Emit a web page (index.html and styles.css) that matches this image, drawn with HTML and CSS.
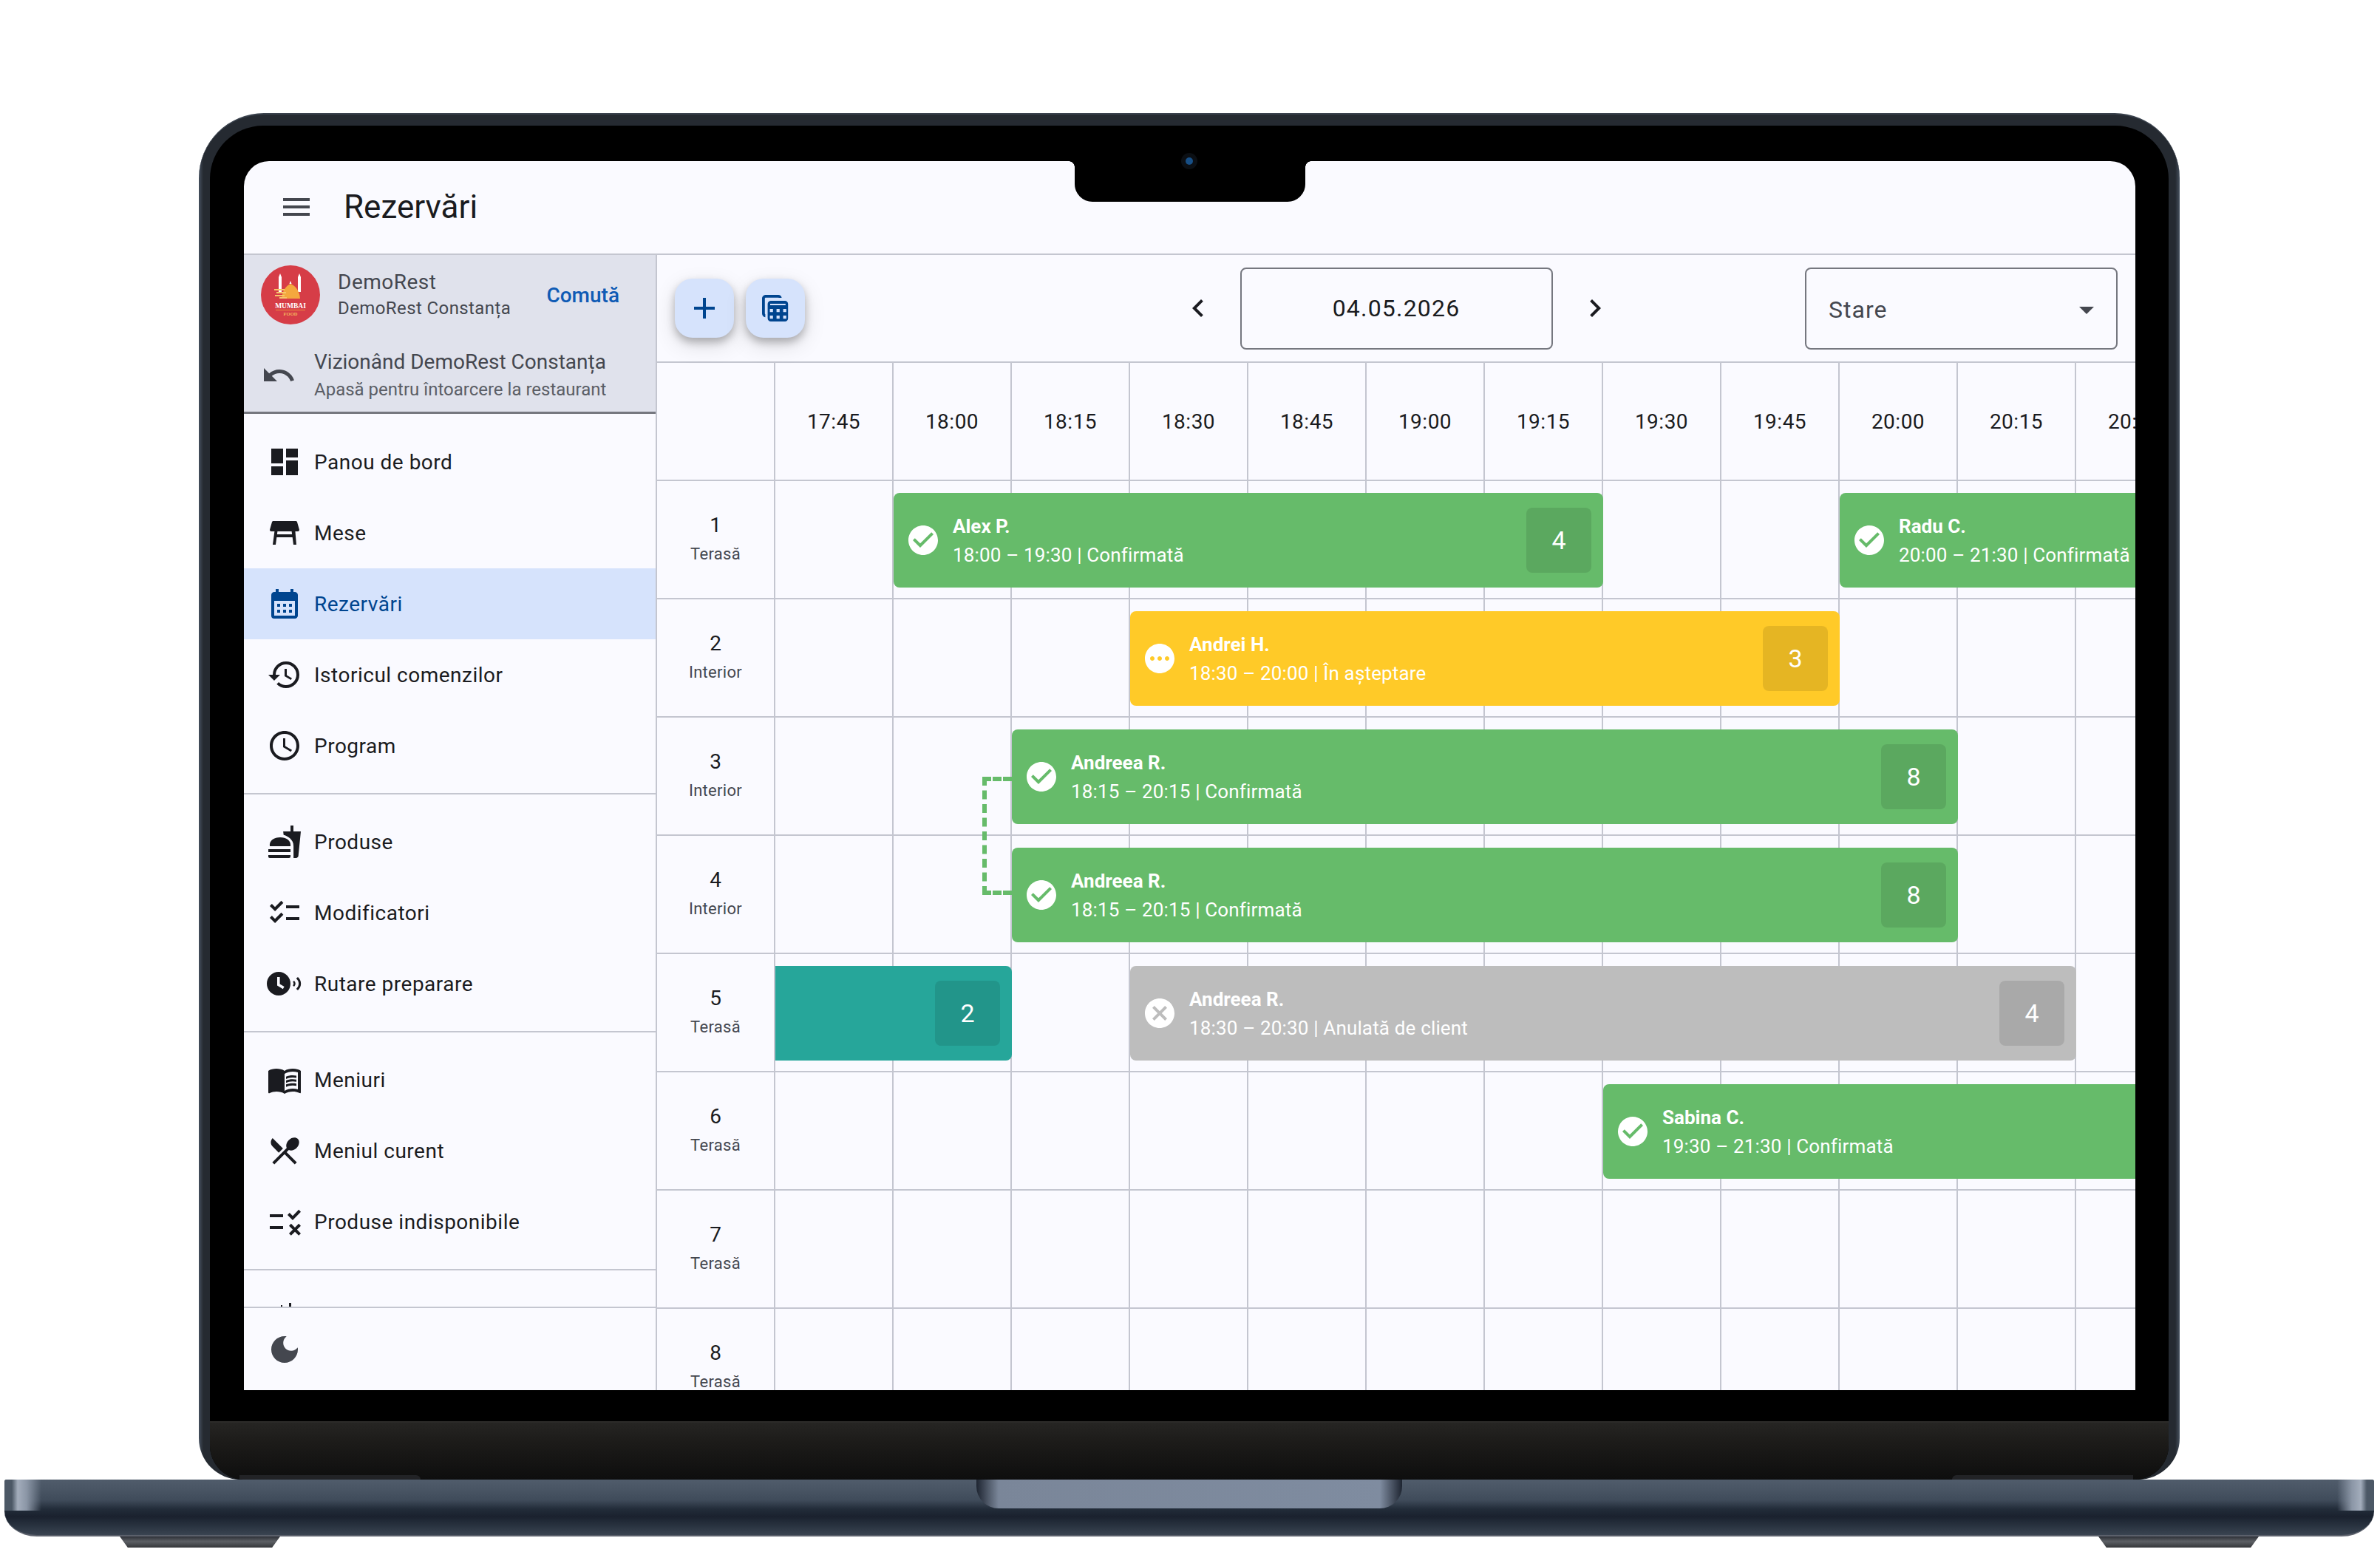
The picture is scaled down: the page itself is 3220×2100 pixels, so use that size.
FILE: index.html
```html
<!DOCTYPE html>
<html lang="ro">
<head>
  <meta charset="UTF-8" />
  <meta name="viewport" content="width=device-width, initial-scale=1.0"/>
  <title>Rezervări</title>
  <link rel="stylesheet" href="styles.css">
</head>
<body>

<div class="device">
  <div class="lid">
    <div class="bezel">
      <div class="screen">
        <div class="notch"><span class="camera"></span></div>

        <header class="topbar">
          <svg class="icon" viewBox="0 0 24 24"><path d="M3 18h18v-2H3v2zm0-5h18v-2H3v2zm0-7v2h18V6H3z"/></svg>
          <h1>Rezervări</h1>
        </header>

        <div class="app">
          <aside class="sidebar">
            <div class="account">
              <div class="account-top">
                <svg class="logo" viewBox="0 0 80 80">
                  <circle cx="40" cy="40" r="40" fill="#d63d47"/>
                  <path d="M24 16h4v20h-4zM50 16h4v20h-4z" fill="#fff"/>
                  <path d="M26 11l2 5h-4zM52 11l2 5h-4zM40 21l1.500 4h-3z" fill="#fff"/>
                  <path d="M28 45c1-11 6-17 12-20 7 3 12 9 13 20z" fill="#f4a83e"/>
                  <path d="M18 32h14v2H18zM21 36h13v2H21zM19 40h13v2H19zM25 43h10v2H25z" fill="#f8c66b"/>
                  <text x="40" y="58" class="logo-name">MUMBAI</text>
                  <path d="M20 60h40v.7H20z" fill="#f4a83e"/>
                  <text x="40" y="68" class="logo-sub">FOOD</text>
                </svg>
                <div class="account-text">
                  <div class="account-name">DemoRest</div>
                  <div class="account-place">DemoRest Constanța</div>
                </div>
                <a class="switch">Comută</a>
              </div>
              <div class="account-back">
                <svg class="icon" viewBox="0 0 24 24"><path d="M12.500 8c-2.650 0-5.050.99-6.900 2.600L2 7v9h9l-3.620-3.620c1.390-1.160 3.160-1.880 5.120-1.880 3.540 0 6.550 2.310 7.600 5.500l2.370-.78C21.080 11.030 17.150 8 12.500 8z"/></svg>
                <div>
                  <div class="back-title">Vizionând DemoRest Constanța</div>
                  <div class="back-sub">Apasă pentru întoarcere la restaurant</div>
                </div>
              </div>
            </div>

            <nav class="nav">
              <a class="nav-item"><svg class="icon" viewBox="0 0 24 24"><path d="M3 13h8V3H3v10zm0 8h8v-6H3v6zm10 0h8V11h-8v10zm0-18v6h8V3h-8z"/></svg>Panou de bord</a>
              <a class="nav-item"><svg class="icon" viewBox="0 0 24 24"><path d="M21.960 9.730l-1.430-5c-.12-.43-.52-.73-.96-.73H4.430c-.45 0-.84.3-.96.73l-1.430 5c-.18.63.3 1.270.96 1.270h2.200L4 20h2l.67-5h10.670l.66 5h2l-.77-9H21c.66 0 1.140-.64.96-1.270zM6.930 13l.27-2h9.600l.27 2H6.930z"/></svg>Mese</a>
              <a class="nav-item active"><svg class="icon" viewBox="0 0 24 24"><path d="M19 4h-1V2h-2v2H8V2H6v2H5c-1.110 0-1.990.9-1.990 2L3 20a2 2 0 0 0 2 2h14c1.100 0 2-.9 2-2V6c0-1.100-.9-2-2-2zm0 16H5V10h14v10zM9 14H7v-2h2v2zm4 0h-2v-2h2v2zm4 0h-2v-2h2v2zm-8 4H7v-2h2v2zm4 0h-2v-2h2v2zm4 0h-2v-2h2v2z"/></svg>Rezervări</a>
              <a class="nav-item"><svg class="icon" viewBox="0 0 24 24"><path d="M13 3a9 9 0 0 0-9 9H1l3.890 3.890.07.14L9 12H6c0-3.870 3.130-7 7-7s7 3.130 7 7-3.130 7-7 7c-1.930 0-3.680-.79-4.940-2.060l-1.420 1.420A8.954 8.954 0 0 0 13 21a9 9 0 0 0 0-18zm-1 5v5l4.280 2.540.72-1.210-3.500-2.080V8H12z"/></svg>Istoricul comenzilor</a>
              <a class="nav-item"><svg class="icon" viewBox="0 0 24 24"><path d="M11.990 2C6.470 2 2 6.480 2 12s4.470 10 9.990 10C17.520 22 22 17.520 22 12S17.520 2 11.990 2zM12 20c-4.420 0-8-3.580-8-8s3.580-8 8-8 8 3.580 8 8-3.580 8-8 8zm.5-13H11v6l5.250 3.150.75-1.230-4.500-2.670z"/></svg>Program</a>
              <hr>
              <a class="nav-item"><svg class="icon" viewBox="0 0 24 24"><path d="M18.060 22.990h1.660c.84 0 1.530-.64 1.630-1.460L23 5.050h-5V1h-1.970v4.050h-4.970l.3 2.340c1.710.47 3.310 1.320 4.270 2.260 1.440 1.420 2.430 2.890 2.430 5.290v8.050zM1 21.990V21h15.030v.99c0 .55-.45 1-1.010 1H2.010c-.56 0-1.010-.45-1.010-1zm15.030-7c.5-4-3.010-6-7.010-6s-7.520 2-7.020 6h14.030zM1.020 17h15v2h-15z"/></svg>Produse</a>
              <a class="nav-item"><svg class="icon" viewBox="0 0 24 24"><path d="M22 7h-9v2h9V7zm0 8h-9v2h9v-2zM5.540 11 2 7.460l1.410-1.410 2.120 2.120 4.240-4.240 1.410 1.410L5.540 11zm0 8L2 15.460l1.410-1.410 2.120 2.120 4.240-4.240 1.410 1.410L5.540 19z"/></svg>Modificatori</a>
              <a class="nav-item"><svg class="icon" viewBox="0 0 24 24"><path d="M8 4a8 8 0 1 0 0 16A8 8 0 0 0 8 4zm2.900 11.600L7 13.200V7.500h1.800v4.700l3 1.800-.9 1.600z"/><path d="M18.500 10c1.200 1.200 1.200 2.800 0 4l-.9-.8c.7-.8.7-1.600 0-2.400zM21 7.500c2.800 2.600 2.800 6.400 0 9l-1.100-1c2.200-2.100 2.200-4.900 0-7z"/></svg>Rutare preparare</a>
              <hr>
              <a class="nav-item"><svg class="icon" viewBox="0 0 24 24"><path d="M21 5c-1.110-.35-2.330-.5-3.500-.5-1.950 0-4.050.4-5.500 1.500-1.450-1.100-3.550-1.500-5.500-1.500S2.450 4.900 1 6v14.650c0 .25.25.5.5.5.1 0 .15-.05.25-.05C3.100 20.450 5.050 20 6.500 20c1.950 0 4.050.4 5.500 1.500 1.350-.85 3.800-1.500 5.500-1.500 1.650 0 3.350.3 4.750 1.050.1.05.15.05.25.05.25 0 .5-.25.5-.5V6c-.6-.45-1.250-.75-2-1zm0 13.500c-1.100-.35-2.300-.5-3.500-.5-1.700 0-4.150.65-5.500 1.500V8c1.350-.85 3.800-1.500 5.500-1.500 1.200 0 2.400.15 3.500.5v11.500z"/><path d="M17.500 10.500c.88 0 1.730.09 2.500.26V9.240c-.79-.15-1.640-.24-2.500-.24-1.700 0-3.240.29-4.500.83v1.660c1.130-.64 2.700-.99 4.500-.99zM13 12.490v1.660c1.130-.64 2.700-.99 4.500-.99.88 0 1.730.09 2.500.26V11.900c-.79-.15-1.640-.24-2.500-.24-1.700 0-3.240.3-4.500.83zM17.500 14.330c-1.700 0-3.240.29-4.500.83v1.660c1.130-.64 2.700-.99 4.500-.99.88 0 1.730.09 2.500.26v-1.520c-.79-.16-1.640-.24-2.500-.24z"/></svg>Meniuri</a>
              <a class="nav-item"><svg class="icon" viewBox="0 0 24 24"><path d="M8.100 13.340l2.830-2.830L3.910 3.500c-1.560 1.560-1.560 4.090 0 5.660l4.190 4.180zm6.780-1.810c1.530.71 3.680.21 5.270-1.380 1.910-1.910 2.280-4.650.81-6.120-1.460-1.460-4.200-1.100-6.120.81-1.590 1.590-2.090 3.740-1.380 5.270L3.700 19.870l1.410 1.410L12 14.410l6.880 6.880 1.410-1.410L13.410 13l1.470-1.470z"/></svg>Meniul curent</a>
              <a class="nav-item"><svg class="icon" viewBox="0 0 24 24"><path d="M2 7h9v2H2zM2 15h9v2H2zM17.500 11 14 7.460l1.410-1.410 2.090 2.120 4.090-4.240L23 5.340 17.500 11zM21.590 13.410 23 14.820 20.410 17.400 23 20l-1.410 1.410L19 18.820l-2.590 2.590L15 20l2.590-2.600L15 14.820l1.410-1.410L19 15.990z"/></svg>Produse indisponibile</a>
              <hr>
              <a class="nav-item"><svg class="icon" viewBox="0 0 24 24"><path d="M15 2h1.500v8H15zM9.500 3.500h1v6h-1zM3 9h18v10H3z"/></svg></a>
            </nav>

            <div class="theme">
              <svg class="icon" viewBox="0 0 24 24"><path d="M12 3c-4.970 0-9 4.030-9 9s4.030 9 9 9 9-4.030 9-9c0-.46-.04-.92-.1-1.360-.98 1.370-2.580 2.260-4.400 2.260-2.980 0-5.400-2.420-5.400-5.400 0-1.810.89-3.420 2.260-4.400-.44-.06-.9-.1-1.360-.1z"/></svg>
            </div>
          </aside>

          <main class="main">
            <div class="toolbar">
              <div class="fabs">
                <button class="fab"><svg class="icon" viewBox="0 0 24 24"><path d="M19 13h-6v6h-2v-6H5v-2h6V5h2v6h6v2z"/></svg></button>
                <button class="fab"><svg class="icon" viewBox="0 0 24 24"><path d="M5.500 3H14c1.200 0 2.100.8 2.300 2h-2c-.1-.1-.2-.1-.3-.1H5.500c-.4 0-.6.3-.6.6v10c0 .3.100.5.3.6v2c-1.300-.2-2.200-1.200-2.200-2.500v-10C3 4.100 4.100 3 5.500 3z"/><path fill-rule="evenodd" d="M9 7h9.500c1.200 0 2.100.9 2.100 2.100v9.800c0 1.200-.9 2.100-2.100 2.100H9c-1.200 0-2.200-.9-2.200-2.100V9.100C6.800 7.900 7.800 7 9 7zM8.500 9v1h10.400V9zM8.300 12.500v2.100h2.100v-2.100zm4.500 0v2.100h2.100v-2.100zm4.500 0v2.100h2.100v-2.100zM8.300 17v2.100h2.100V17zm4.500 0v2.100h2.100V17zm4.500 0v2.100h2.100V17z"/></svg></button>
              </div>
              <div class="date-nav">
                <svg class="icon" viewBox="0 0 24 24"><path d="M15.410 7.410 14 6l-6 6 6 6 1.410-1.410L10.830 12z"/></svg>
                <div class="date-field">04.05.2026</div>
                <svg class="icon" viewBox="0 0 24 24"><path d="M10 6 8.590 7.410 13.170 12l-4.580 4.590L10 18l6-6z"/></svg>
              </div>
              <div class="select">
                <span>Stare</span>
                <svg class="icon" viewBox="0 0 24 24"><path d="M7 10l5 5 5-5z"/></svg>
              </div>
            </div>

            <div class="board">
              <div class="time"></div>
              <div class="time">17:45</div>
              <div class="time">18:00</div>
              <div class="time">18:15</div>
              <div class="time">18:30</div>
              <div class="time">18:45</div>
              <div class="time">19:00</div>
              <div class="time">19:15</div>
              <div class="time">19:30</div>
              <div class="time">19:45</div>
              <div class="time">20:00</div>
              <div class="time">20:15</div>
              <div class="time">20:30</div>

              <div class="table-cell" style="grid-row: 2"><b>1</b><span>Terasă</span></div>
              <div class="table-cell" style="grid-row: 3"><b>2</b><span>Interior</span></div>
              <div class="table-cell" style="grid-row: 4"><b>3</b><span>Interior</span></div>
              <div class="table-cell" style="grid-row: 5"><b>4</b><span>Interior</span></div>
              <div class="table-cell" style="grid-row: 6"><b>5</b><span>Terasă</span></div>
              <div class="table-cell" style="grid-row: 7"><b>6</b><span>Terasă</span></div>
              <div class="table-cell" style="grid-row: 8"><b>7</b><span>Terasă</span></div>
              <div class="table-cell" style="grid-row: 9"><b>8</b><span>Terasă</span></div>

              <div class="booking green" style="grid-row: 2; grid-column: 3 / 9">
                <svg class="icon" viewBox="0 0 24 24"><path d="M12 2C6.480 2 2 6.480 2 12s4.480 10 10 10 10-4.480 10-10S17.520 2 12 2zm-2 15-5-5 1.410-1.410L10 14.170l7.590-7.590L19 8l-9 9z"/></svg>
                <div class="booking-text"><b>Alex P.</b><span>18:00 – 19:30 | Confirmată</span></div>
                <div class="party">4</div>
              </div>
              <div class="booking green" style="grid-row: 2; grid-column: 11 / 17">
                <svg class="icon" viewBox="0 0 24 24"><path d="M12 2C6.480 2 2 6.480 2 12s4.480 10 10 10 10-4.480 10-10S17.520 2 12 2zm-2 15-5-5 1.410-1.410L10 14.170l7.590-7.590L19 8l-9 9z"/></svg>
                <div class="booking-text"><b>Radu C.</b><span>20:00 – 21:30 | Confirmată</span></div>
              </div>
              <div class="booking yellow" style="grid-row: 3; grid-column: 5 / 11">
                <svg class="icon" viewBox="0 0 24 24"><path d="M12 2C6.480 2 2 6.480 2 12s4.480 10 10 10 10-4.480 10-10S17.520 2 12 2zM7 13.500c-.83 0-1.500-.67-1.500-1.500s.67-1.500 1.500-1.500 1.500.67 1.500 1.500-.67 1.500-1.500 1.500zm5 0c-.83 0-1.500-.67-1.500-1.500s.67-1.500 1.500-1.500 1.500.67 1.500 1.500-.67 1.500-1.500 1.500zm5 0c-.83 0-1.500-.67-1.500-1.500s.67-1.500 1.500-1.500 1.500.67 1.500 1.500-.67 1.500-1.500 1.500z"/></svg>
                <div class="booking-text"><b>Andrei H.</b><span>18:30 – 20:00 | În așteptare</span></div>
                <div class="party">3</div>
              </div>
              <div class="booking green" style="grid-row: 4; grid-column: 4 / 12">
                <svg class="icon" viewBox="0 0 24 24"><path d="M12 2C6.480 2 2 6.480 2 12s4.480 10 10 10 10-4.480 10-10S17.520 2 12 2zm-2 15-5-5 1.410-1.410L10 14.170l7.590-7.590L19 8l-9 9z"/></svg>
                <div class="booking-text"><b>Andreea R.</b><span>18:15 – 20:15 | Confirmată</span></div>
                <div class="party">8</div>
              </div>
              <div class="booking green" style="grid-row: 5; grid-column: 4 / 12">
                <svg class="icon" viewBox="0 0 24 24"><path d="M12 2C6.480 2 2 6.480 2 12s4.480 10 10 10 10-4.480 10-10S17.520 2 12 2zm-2 15-5-5 1.410-1.410L10 14.170l7.590-7.590L19 8l-9 9z"/></svg>
                <div class="booking-text"><b>Andreea R.</b><span>18:15 – 20:15 | Confirmată</span></div>
                <div class="party">8</div>
              </div>
              <div class="booking teal" style="grid-row: 6; grid-column: 2 / 4">
                <div class="party">2</div>
              </div>
              <div class="booking grey" style="grid-row: 6; grid-column: 5 / 13">
                <svg class="icon" viewBox="0 0 24 24"><path d="M12 2C6.470 2 2 6.470 2 12s4.470 10 10 10 10-4.470 10-10S17.530 2 12 2zm5 13.590L15.590 17 12 13.410 8.410 17 7 15.590 10.590 12 7 8.410 8.410 7 12 10.590 15.590 7 17 8.410 13.410 12 17 15.590z"/></svg>
                <div class="booking-text"><b>Andreea R.</b><span>18:30 – 20:30 | Anulată de client</span></div>
                <div class="party">4</div>
              </div>
              <div class="booking green" style="grid-row: 7; grid-column: 9 / 17">
                <svg class="icon" viewBox="0 0 24 24"><path d="M12 2C6.480 2 2 6.480 2 12s4.480 10 10 10 10-4.480 10-10S17.520 2 12 2zm-2 15-5-5 1.410-1.410L10 14.170l7.590-7.590L19 8l-9 9z"/></svg>
                <div class="booking-text"><b>Sabina C.</b><span>19:30 – 21:30 | Confirmată</span></div>
              </div>

              <!-- links the two tables of the same booking -->
              <div class="link" style="grid-row: 4 / 6; grid-column: 3"></div>
            </div>
          </main>
        </div>
      </div>
      <div class="chin"></div>
    </div>
  </div>

  <div class="base"><div class="hinge"></div></div>
  <div class="feet"><span class="foot"></span><span class="foot"></span></div>
</div>

</body>
</html>
```

FILE: styles.css
```css
* {
  box-sizing: border-box;
}
html, body {
  margin: 0;
  background: #fff;
  font-family: Roboto, "Liberation Sans", sans-serif;
  color: #1a1b20;
}
.icon {
  width: 48px;
  height: 48px;
  flex: none;
  fill: currentColor;
  display: block;
}

/* laptop */
.device {
  width: 3220px;
  height: 2100px;
  padding: 153px 0 0 0;
  display: flex;
  flex-direction: column;
  align-items: center;
  overflow: hidden;
}
.lid {
  width: 2680px;
  height: 1849px;
  margin-left: -2px;
  padding: 15px 15px 0 15px;
  background: linear-gradient(90deg, #46515f 0, #252a31 6px, #252a31 calc(100% - 6px), #46515f 100%);
  border-top: 2px solid #3a424d;
  border-radius: 88px 88px 56px 56px;
}
.bezel {
  height: 100%;
  padding: 48px 45px 0 46px;
  background: #000;
  border-radius: 72px 72px 46px 46px;
  display: flex;
  flex-direction: column;
  overflow: hidden;
}
.screen {
  position: relative;
  height: 1663px;
  flex: none;
  display: flex;
  flex-direction: column;
  background: #fafaff;
  border-radius: 34px 34px 0 0;
}
.chin {
  position: relative;
  flex: 1;
  margin: 42px -45px 0 -46px;
  background: linear-gradient(180deg, #262523 0, #1c1b19 35%, #0e0e0e 100%);
  border-top: 2px solid #2c2b29;
}
.chin::before,
.chin::after {
  content: "";
  position: absolute;
  bottom: 0;
  width: 245px;
  height: 6px;
  background: #222326;
}
.chin::before {
  left: 40px;
  border-radius: 0 8px 0 0;
}
.chin::after {
  right: 48px;
  border-radius: 8px 0 0 0;
}
.notch {
  position: absolute;
  top: 0;
  left: 1124px;
  width: 312px;
  height: 55px;
  background: #000;
  border-radius: 0 0 24px 24px;
  z-index: 2;
}
.notch::before,
.notch::after {
  content: "";
  position: absolute;
  top: 0;
  width: 8px;
  height: 8px;
}
.notch::before {
  left: -8px;
  background: radial-gradient(circle at 0 100%, transparent 7.5px, #000 8px);
}
.notch::after {
  right: -8px;
  background: radial-gradient(circle at 100% 100%, transparent 7.5px, #000 8px);
}
.camera {
  position: absolute;
  top: -5px;
  left: 150px;
  width: 10px;
  height: 10px;
  border-radius: 50%;
  background: #174f86;
  box-shadow: 0 0 0 6px #0b0f14;
}
.base {
  width: 3206px;
  height: 77px;
  flex: none;
  margin-left: -2px;
  display: flex;
  justify-content: center;
  border-radius: 3px 3px 44px 44px / 3px 3px 34px 34px;
  border-bottom: 2px solid #5b606b;
  background:
    linear-gradient(90deg, #4c5866 0, #4c5866 10px, #a3adbc 18px, #8b96a6 30px, rgba(76, 88, 102, 0) 50px) left top / 60px 42px no-repeat,
    linear-gradient(270deg, #4c5866 0, #4c5866 10px, #a3adbc 18px, #8b96a6 30px, rgba(76, 88, 102, 0) 50px) right top / 60px 42px no-repeat,
    linear-gradient(180deg, #505c6b 0, #4a5665 12px, #3f4b5a 28px, #222c39 40px, #1a212e 50px, #28323f 62px, #3a4451 100%);
}
.hinge {
  width: 576px;
  height: 39px;
  border-radius: 0 0 30px 30px;
  background: linear-gradient(90deg, #1e2531 0, #7a8699 30px, #7f8ca0 calc(100% - 30px), #1e2531 100%);
}
.feet {
  width: 3206px;
  margin-left: -2px;
  padding: 0 156px;
  display: flex;
  justify-content: space-between;
}
.foot {
  width: 217px;
  height: 15px;
  clip-path: polygon(0 0, 100% 0, 95% 100%, 5% 100%);
  background: linear-gradient(180deg, #2e3138 0, #5d6065 45%, #35373a 100%);
}

/* top bar */
.topbar {
  height: 127px;
  flex: none;
  display: flex;
  align-items: center;
  gap: 40px;
  padding: 0 0 2px 47px;
  border-bottom: 2px solid #c4c6d0;
}
.topbar .icon {
  color: #44474f;
}
.topbar h1 {
  margin: 0;
  font-size: 44px;
  font-weight: 400;
}

.app {
  flex: 1;
  min-height: 0;
  display: flex;
}

/* sidebar */
.sidebar {
  width: 559px;
  flex: none;
  display: flex;
  flex-direction: column;
  border-right: 2px solid #c4c6d0;
}
.account {
  height: 215px;
  flex: none;
  background: #e0e2ec;
  border-bottom: 3px solid #75777f;
  color: #44474f;
}
.account-top {
  height: 108px;
  display: flex;
  align-items: center;
  padding: 0 49px 0 23px;
}
.logo {
  width: 80px;
  height: 80px;
  flex: none;
  margin: 0 24px 0 0;
}
.logo-name {
  font: 700 9.500px "Liberation Serif", serif;
  fill: #fff;
  text-anchor: middle;
}
.logo-sub {
  font: 700 6.500px "Liberation Serif", serif;
  fill: #f4b65d;
  text-anchor: middle;
}
.account-text {
  flex: 1;
}
.account-name {
  font-size: 28px;
  line-height: 36px;
  letter-spacing: .5px;
}
.account-place {
  font-size: 24px;
  line-height: 34px;
  letter-spacing: .4px;
}
.switch {
  font-size: 28px;
  font-weight: 500;
  color: #0f5bb5;
}
.account-back {
  height: 104px;
  display: flex;
  align-items: center;
  gap: 24px;
  padding: 6px 0 0 23px;
}
.back-title {
  font-size: 28px;
  line-height: 38px;
  white-space: nowrap;
}
.back-sub {
  font-size: 24px;
  line-height: 36px;
  white-space: nowrap;
  color: #5b5e66;
}
.nav {
  flex: 1;
  min-height: 0;
  overflow: hidden;
  padding-top: 17px;
}
.nav hr {
  margin: 16px 0 16px;
  border: 0;
  border-top: 2px solid #c4c6d0;
}
.nav-item {
  height: 96px;
  display: flex;
  align-items: center;
  gap: 16px;
  padding-left: 31px;
  font-size: 28px;
  letter-spacing: .5px;
  color: #1a1b20;
}
.nav-item.active {
  background: #d6e3fc;
  color: #00458f;
}
.theme {
  height: 113px;
  flex: none;
  display: flex;
  align-items: center;
  padding: 0 0 0 31px;
  border-top: 2px solid #c4c6d0;
  color: #44474f;
}

/* main column */
.main {
  flex: 1;
  min-width: 0;
  display: flex;
  flex-direction: column;
  overflow: hidden;
}
.toolbar {
  height: 146px;
  flex: none;
  display: grid;
  grid-template-columns: 1fr auto 1fr;
  align-items: center;
  padding: 0 24px 0 24px;
  border-bottom: 2px solid #c4c6d0;
}
.fabs {
  display: flex;
  gap: 16px;
}
.fab {
  width: 80px;
  height: 80px;
  padding: 0;
  display: flex;
  align-items: center;
  justify-content: center;
  border: none;
  border-radius: 24px;
  background: #d6e3fc;
  color: #00458f;
  box-shadow: 0 6px 12px rgba(0, 0, 0, .26), 0 10px 30px rgba(0, 0, 0, .12);
}
.date-nav {
  display: flex;
  align-items: center;
  gap: 33px;
  color: #1a1b20;
}
.date-field {
  width: 423px;
  height: 111px;
  display: flex;
  align-items: center;
  justify-content: center;
  border: 2px solid #75777f;
  border-radius: 8px;
  font-size: 32px;
  letter-spacing: 1.2px;
}
.select {
  justify-self: end;
  width: 423px;
  height: 111px;
  display: flex;
  align-items: center;
  justify-content: space-between;
  padding: 3px 16px 0 30px;
  border: 2px solid #75777f;
  border-radius: 8px;
  font-size: 32px;
  letter-spacing: 1px;
  color: #44474f;
}

/* reservation board: the background draws the grid lines */
.board {
  flex: 1;
  min-height: 0;
  display: grid;
  grid-template-columns: repeat(16, 160px);
  grid-auto-rows: 160px;
  background-image:
    linear-gradient(90deg, transparent 158px, #c4c6d0 158px),
    linear-gradient(180deg, transparent 158px, #c4c6d0 158px);
  background-size: 160px 160px;
}
.time {
  grid-row: 1;
  display: flex;
  align-items: center;
  justify-content: center;
  padding: 0 2px 2px 0;
  font-size: 28px;
  letter-spacing: .5px;
}
.table-cell {
  grid-column: 1;
  display: flex;
  flex-direction: column;
  align-items: center;
  padding: 42px 2px 0 0;
}
.table-cell b {
  font-size: 28px;
  font-weight: 400;
  line-height: 36px;
}
.table-cell span {
  margin-top: 6px;
  font-size: 22px;
  line-height: 30px;
  letter-spacing: .3px;
  color: #44474f;
}
.booking {
  display: flex;
  align-items: center;
  gap: 16px;
  margin: 16px 0;
  padding: 0 16px;
  border-radius: 8px;
  color: #fff;
  overflow: hidden;
}
.booking-text {
  flex: 1;
  white-space: nowrap;
}
.booking-text b {
  display: block;
  font-size: 26px;
  font-weight: 700;
  line-height: 40px;
}
.booking-text span {
  display: block;
  font-size: 26px;
  line-height: 38px;
  letter-spacing: .16px;
}
.party {
  width: 88px;
  height: 88px;
  display: flex;
  align-items: center;
  justify-content: center;
  margin-left: auto;
  border-radius: 8px;
  font-size: 34px;
  background: rgba(0, 0, 0, .1);
}
.green { background: #66bb6a; }
.yellow { background: #ffca28; }
.teal {
  background: #26a69a;
  border-radius: 0 8px 8px 0;
}
.grey { background: #bdbdbd; }
.link {
  justify-self: end;
  width: 40px;
  margin: 80px 0;
  border: 6px dashed #66bb6a;
  border-right: 0;
}
```
